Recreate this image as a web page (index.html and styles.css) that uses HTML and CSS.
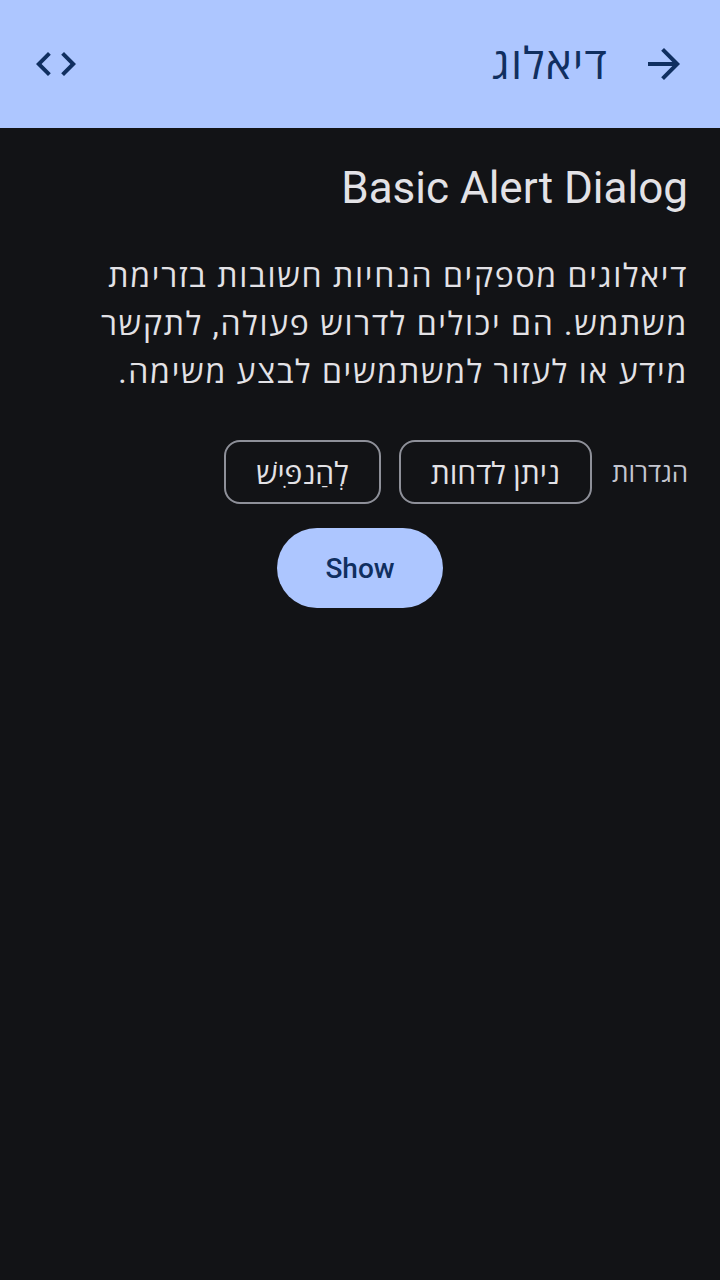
FILE: index.html
```html
<!DOCTYPE html>
<html lang="he" dir="rtl">
<head>
<meta charset="utf-8">
<link rel="stylesheet" href="styles.css">
</head>
<body>
<header class="appbar">
  <button class="icon-btn" aria-label="חזרה">
    <svg viewBox="0 0 24 24" width="48" height="48"><path d="M12 4l-1.41 1.41L16.17 11H4v2h12.17l-5.58 5.59L12 20l8-8z" fill="currentColor"/></svg>
  </button>
  <h1 class="appbar-title">דיאלוג</h1>
  <span class="spacer"></span>
  <button class="icon-btn" aria-label="קוד">
    <svg viewBox="0 0 24 24" width="48" height="48"><path d="M9.4 16.6L4.8 12l4.6-4.6L8 6l-6 6 6 6 1.4-1.4zm5.2 0l4.6-4.6-4.6-4.6L16 6l6 6-6 6-1.4-1.4z" fill="currentColor"/></svg>
  </button>
</header>
<main class="content">
  <h2 class="title" dir="ltr">Basic Alert Dialog</h2>
  <p class="desc">דיאלוגים מספקים הנחיות חשובות בזרימת משתמש. הם יכולים לדרוש פעולה, לתקשר מידע או לעזור למשתמשים לבצע משימה.</p>
  <div class="settings">
    <span class="settings-label">הגדרות</span>
    <button class="chip">ניתן לדחות</button>
    <button class="chip">לְהַנפִּישׁ</button>
  </div>
  <div class="actions">
    <button class="show-btn">Show</button>
  </div>
</main>
</body>
</html>
```
FILE: styles.css
```css
html, body {
  margin: 0;
  padding: 0;
}
body {
  width: 720px;
  height: 1280px;
  background: #121316;
  font-family: Roboto, "Open Sans", "Noto Sans", "DejaVu Sans", sans-serif;
  color: #e3e2e6;
}
.appbar {
  height: 128px;
  background: #adc6ff;
  color: #102f60;
  display: flex;
  align-items: center;
  padding: 0 32px;
  box-sizing: border-box;
}
.icon-btn {
  width: 48px;
  height: 48px;
  padding: 0;
  border: 0;
  background: none;
  color: inherit;
  display: flex;
}
.appbar-title {
  margin: 0 32px 0 0;
  font-size: 44px;
  font-weight: 400;
  line-height: 56px;
  letter-spacing: 1.2px;
}
.spacer { flex: 1; }
.content {
  padding: 28px 32px;
}
.title {
  margin: 0;
  font-size: 44px;
  font-weight: 400;
  line-height: 64px;
  text-align: right;
}
.desc {
  margin: 32px 0 0;
  font-size: 32px;
  line-height: 48px;
  letter-spacing: 1.7px;
}
.settings {
  margin-top: 44px;
  display: flex;
  align-items: center;
  gap: 18px;
}
.settings-label {
  font-size: 26px;
  color: #c4c6d0;
  margin-left: 2px;
}
.chip {
  height: 64px;
  padding: 0 30px;
  border: 2px solid #8e9099;
  border-radius: 16px;
  background: none;
  color: #e3e2e6;
  font-family: inherit;
  font-size: 30px;
}
.actions {
  margin-top: 24px;
  display: flex;
  justify-content: center;
}
.show-btn {
  height: 80px;
  padding: 0 48px;
  border: 0;
  border-radius: 40px;
  background: #adc6ff;
  color: #102f60;
  font-family: Roboto, sans-serif;
  font-weight: 500;
  font-size: 28px;
}
```
